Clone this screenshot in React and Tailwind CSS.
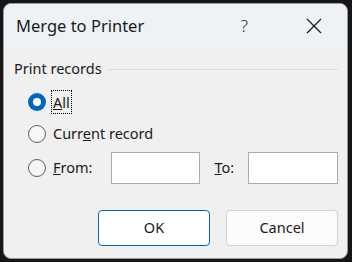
import React from 'react';

const font = { fontFamily: '"Noto Sans", "Open Sans", sans-serif' };

function Radio({ checked }) {
  if (checked) {
    return (
      <span className="w-[18px] h-[18px] rounded-full bg-[#0067c0] flex items-center justify-center shrink-0">
        <span className="w-[8px] h-[8px] rounded-full bg-white" />
      </span>
    );
  }
  return <span className="w-[18px] h-[18px] rounded-full border border-[#5f5f5f] bg-[#f7f7f7] shrink-0" />;
}

function Field() {
  return <div className="w-[90px] h-[32px] bg-white border border-[#a9a9b0]" />;
}

export default function App() {
  return (
    <div className="w-[352px] h-[262px] bg-[#161616] pt-[3px] pl-[3px] pr-[4px] pb-[3px]" style={font}>
      <div className="h-full rounded-[8px] border border-[#9c9c9c] bg-[#f0f0f0] overflow-hidden flex flex-col text-[#1a1a1a]">
        <div className="h-[44px] bg-[#eef2f7] flex items-center pl-[12px] shrink-0">
          <span className="text-[16.5px]">Merge to Printer</span>
          <span className="ml-auto text-[17px] mr-[58px] font-light">?</span>
          <svg width="16" height="16" viewBox="0 0 16 16" className="mr-[25px]">
            <path d="M1 1 L15 15 M15 1 L1 15" stroke="#1a1a1a" strokeWidth="1.2" />
          </svg>
        </div>
        <div className="flex-1 pl-[10px] pr-[9px] pt-[11px]">
          <div className="flex items-center h-[20px] text-[14.5px]">
            <span>Print records</span>
            <span className="flex-1 h-px bg-[#dcdcdc] ml-[6px]" />
          </div>
          <div className="pl-[14px] mt-[11px] flex flex-col text-[14.5px]">
            <div className="flex items-center h-[24px] gap-[5px]">
              <Radio checked />
              <span className="border border-dotted border-black px-[1px] leading-[22px]">
                <span className="underline">A</span>ll
              </span>
            </div>
            <div className="flex items-center h-[24px] gap-[7px] mt-[8px]">
              <Radio />
              <span>Curr<span className="underline">e</span>nt record</span>
            </div>
            <div className="flex items-center h-[32px] mt-[6px]">
              <Radio />
              <span className="ml-[7px] w-[58px]"><span className="underline">F</span>rom:</span>
              <Field />
              <span className="ml-[14px] w-[34px]"><span className="underline">T</span>o:</span>
              <Field />
            </div>
          </div>
          <div className="flex justify-end gap-[16px] mt-[26px] text-[14.5px]">
            <button className="w-[112px] h-[36px] rounded-[4px] border border-[#0067c0] bg-white">OK</button>
            <button className="w-[112px] h-[36px] rounded-[4px] border border-[#d1d1d1] bg-[#fbfbfb]">Cancel</button>
          </div>
        </div>
      </div>
    </div>
  );
}
